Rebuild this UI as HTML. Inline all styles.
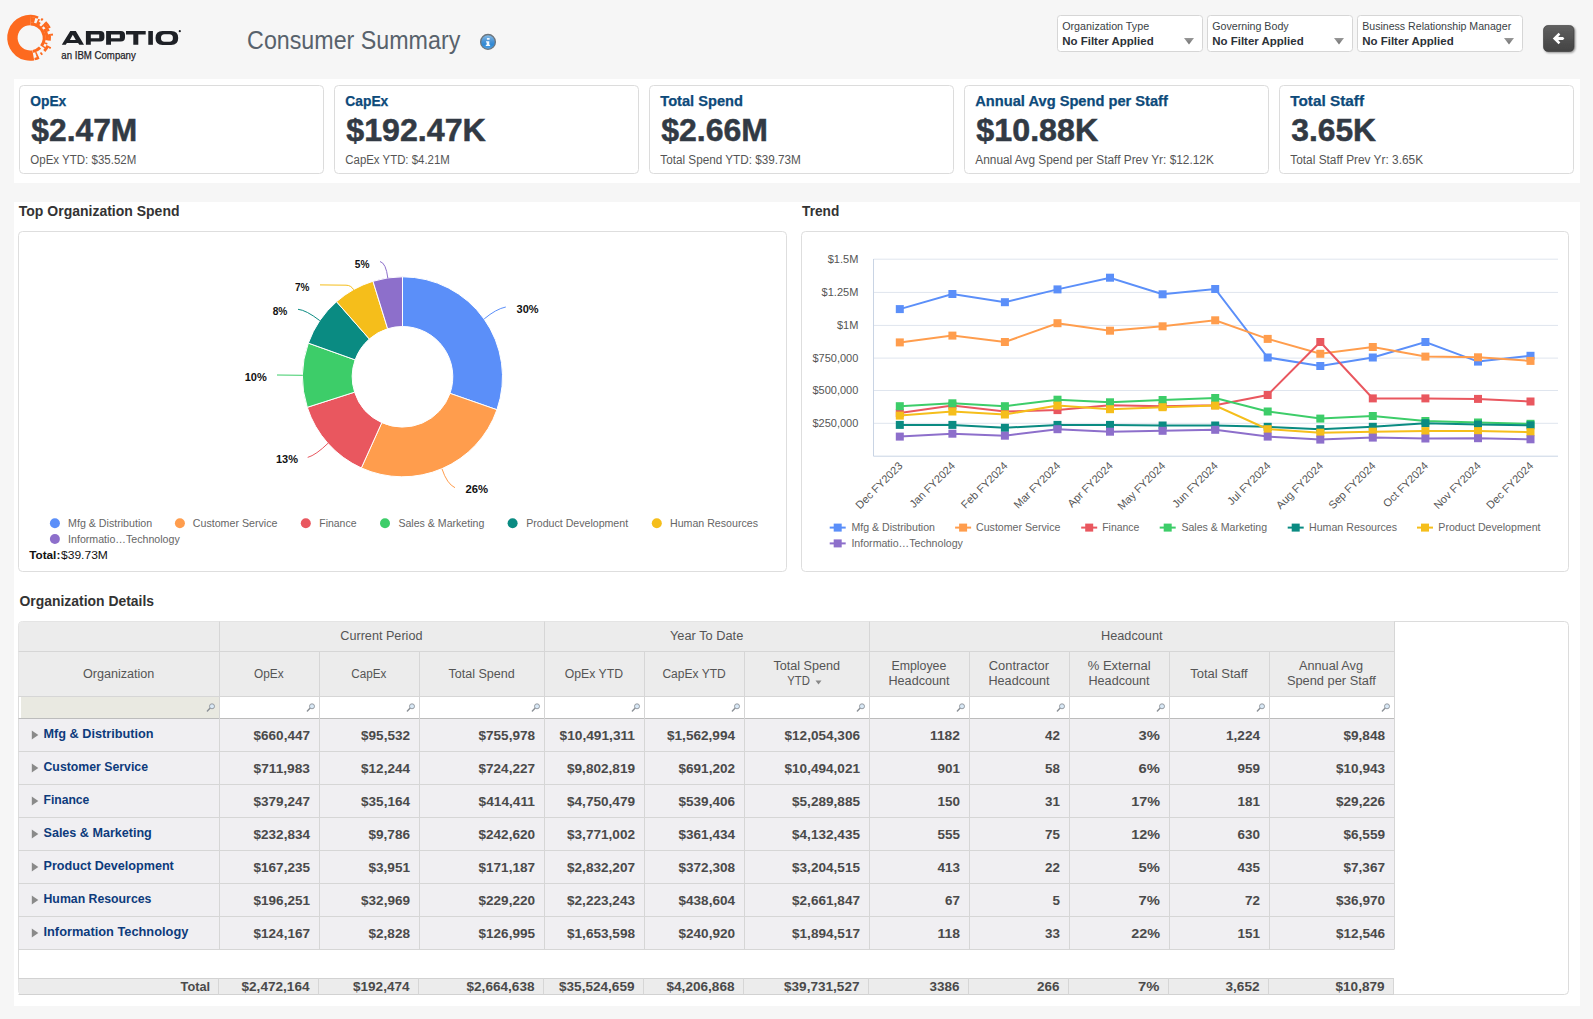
<!DOCTYPE html>
<html><head><meta charset="utf-8"><title>Consumer Summary</title>
<style>
html,body{margin:0;padding:0;background:#f6f6f6;overflow:hidden}
svg{display:block;font-family:"Liberation Sans",sans-serif}
</style></head><body>
<svg width="1593" height="1019" viewBox="0 0 1593 1019">
<rect x="0" y="0" width="1593" height="1019" fill="#f6f6f6" />
<path d="M34.19,60.45 A23.0,23.0 0 1 1 31.00,14.81 L30.64,25.21 A12.6,12.6 0 1 0 32.39,50.21 Z" fill="#fd6a1f"/>
<path d="M30.74,22.31 A15.5,15.5 0 0 1 42.68,47.00 L40.18,45.16 A12.4,12.4 0 0 0 30.63,25.41 Z" fill="#fd6a1f"/>
<path d="M41.16,48.76 A15.5,15.5 0 0 1 33.32,52.98 L32.69,49.95 A12.4,12.4 0 0 0 38.97,46.57 Z" fill="#fd6a1f"/>
<path d="M30.84,19.61 A18.2,18.2 0 0 1 34.73,20.17 L33.98,23.08 A15.2,15.2 0 0 0 30.73,22.61 Z" fill="#fd6a1f"/>
<path d="M37.31,21.05 A18.2,18.2 0 0 1 40.74,22.96 L39.01,25.41 A15.2,15.2 0 0 0 36.14,23.81 Z" fill="#fd6a1f"/>
<path d="M42.84,24.71 A18.2,18.2 0 0 1 44.02,25.96 L41.74,27.91 A15.2,15.2 0 0 0 40.76,26.87 Z" fill="#fd6a1f"/>
<path d="M45.63,28.16 A18.2,18.2 0 0 1 48.20,40.46 L45.24,40.02 A15.2,15.2 0 0 0 43.09,29.75 Z" fill="#fd6a1f"/>
<path d="M47.60,43.12 A18.2,18.2 0 0 1 47.03,44.74 L44.25,43.59 A15.2,15.2 0 0 0 44.74,42.24 Z" fill="#fd6a1f"/>
<path d="M45.80,47.17 A18.2,18.2 0 0 1 44.85,48.60 L42.43,46.82 A15.2,15.2 0 0 0 43.23,45.63 Z" fill="#fd6a1f"/>
<path d="M37.60,54.43 A18.2,18.2 0 0 1 36.01,55.05 L35.05,52.21 A15.2,15.2 0 0 0 36.38,51.69 Z" fill="#fd6a1f"/>
<path d="M30.93,17.01 A20.799999999999997,20.799999999999997 0 0 1 35.37,17.65 L34.65,20.46 A17.9,17.9 0 0 0 30.82,19.91 Z" fill="#fd6a1f"/>
<path d="M38.33,18.65 A20.799999999999997,20.799999999999997 0 0 1 40.09,19.50 L38.71,22.05 A17.9,17.9 0 0 0 37.19,21.32 Z" fill="#fd6a1f"/>
<path d="M44.65,22.84 A20.799999999999997,20.799999999999997 0 0 1 49.79,30.82 L47.06,31.80 A17.9,17.9 0 0 0 42.63,24.92 Z" fill="#fd6a1f"/>
<path d="M50.62,33.83 A20.799999999999997,20.799999999999997 0 0 1 50.78,40.84 L47.91,40.41 A17.9,17.9 0 0 0 47.77,34.38 Z" fill="#fd6a1f"/>
<path d="M49.20,46.26 A20.799999999999997,20.799999999999997 0 0 1 45.31,52.09 L43.21,50.10 A17.9,17.9 0 0 0 46.55,45.08 Z" fill="#fd6a1f"/>
<path d="M43.01,54.19 A20.799999999999997,20.799999999999997 0 0 1 41.41,55.32 L39.84,52.88 A17.9,17.9 0 0 0 41.22,51.91 Z" fill="#fd6a1f"/>
<path d="M38.66,56.80 A20.799999999999997,20.799999999999997 0 0 1 36.83,57.51 L35.91,54.77 A17.9,17.9 0 0 0 37.48,54.15 Z" fill="#fd6a1f"/>
<path d="M31.00,14.81 A23.0,23.0 0 0 1 38.59,16.39 L37.68,18.71 A20.5,20.5 0 0 0 30.92,17.31 Z" fill="#fd6a1f"/>
<path d="M41.70,17.88 A23.0,23.0 0 0 1 43.52,19.05 L42.08,21.09 A20.5,20.5 0 0 0 40.45,20.05 Z" fill="#fd6a1f"/>
<path d="M46.18,21.26 A23.0,23.0 0 0 1 50.77,27.50 L48.53,28.62 A20.5,20.5 0 0 0 44.44,23.05 Z" fill="#fd6a1f"/>
<path d="M52.78,33.41 A23.0,23.0 0 0 1 53.09,35.56 L50.60,35.80 A20.5,20.5 0 0 0 50.32,33.89 Z" fill="#fd6a1f"/>
<path d="M51.21,47.15 A23.0,23.0 0 0 1 50.24,49.09 L48.06,47.86 A20.5,20.5 0 0 0 48.93,46.14 Z" fill="#fd6a1f"/>
<path d="M39.55,58.81 A23.0,23.0 0 0 1 34.82,60.33 L34.32,57.88 A20.5,20.5 0 0 0 38.54,56.53 Z" fill="#fd6a1f"/>
<path d="M61.8,44.8 L70.3,31 L75.8,31 L84,44.8 L79.3,44.8 L78.1,42.9 L66.9,42.9 L65.7,44.8 Z M69.9,39.9 L75.8,39.9 L72.8,34.8 Z" fill="#1e2126" fill-rule="evenodd"/>
<path d="M85.9,31 L100.2,31 Q104.4,31 104.4,35 L104.4,37.6 Q104.4,41.6 100.2,41.6 L90.80000000000001,41.6 L90.80000000000001,44.8 L85.9,44.8 Z M90.80000000000001,34.6 L99.2,34.6 L99.2,38.2 L90.80000000000001,38.2 Z" fill="#1e2126" fill-rule="evenodd"/>
<path d="M106.1,31 L120.8,31 Q125.0,31 125.0,35 L125.0,37.6 Q125.0,41.6 120.8,41.6 L111.0,41.6 L111.0,44.8 L106.1,44.8 Z M111.0,34.6 L119.8,34.6 L119.8,38.2 L111.0,38.2 Z" fill="#1e2126" fill-rule="evenodd"/>
<path d="M126,31 L145.7,31 L145.7,34.6 L138.3,34.6 L138.3,44.8 L133.3,44.8 L133.3,34.6 L126,34.6 Z" fill="#1e2126"/>
<rect x="148.3" y="31" width="4.6" height="13.8" fill="#1e2126"/>
<path d="M162.5,30.9 L171.2,30.9 Q178.2,30.9 178.2,37.9 Q178.2,44.9 171.2,44.9 L162.5,44.9 Q155.5,44.9 155.5,37.9 Q155.5,30.9 162.5,30.9 Z M164.5,34.3 Q161,34.3 161,38 Q161,41.8 164.5,41.8 L169.4,41.8 Q172.9,41.8 172.9,38 Q172.9,34.3 169.4,34.3 Z" fill="#1e2126" fill-rule="evenodd"/>
<circle cx="179.8" cy="31.2" r="1.1" fill="#1e2126"/>
<text x="61.30" y="58.70" font-size="10.5" font-weight="400" fill="#1f2228" textLength="74.50" lengthAdjust="spacingAndGlyphs" stroke="#1f2228" stroke-width="0.25">an IBM Company</text>
<text x="247.10" y="48.80" font-size="25" font-weight="400" fill="#58626c" textLength="213.18" lengthAdjust="spacingAndGlyphs" >Consumer Summary</text>
<defs><linearGradient id="ig" x1="0" y1="0" x2="0" y2="1"><stop offset="0" stop-color="#8cbfe8"/><stop offset="0.45" stop-color="#4a94d6"/><stop offset="0.7" stop-color="#2f88d4"/><stop offset="1" stop-color="#5aa6e6"/></linearGradient><linearGradient id="bg" x1="0" y1="0" x2="0" y2="1"><stop offset="0" stop-color="#606060"/><stop offset="1" stop-color="#434343"/></linearGradient><linearGradient id="tg" x1="0" y1="0" x2="0" y2="1"><stop offset="0" stop-color="#9a9a9a"/><stop offset="1" stop-color="#707070"/></linearGradient><filter id="sh" x="-30%" y="-30%" width="160%" height="170%"><feGaussianBlur in="SourceAlpha" stdDeviation="1"/><feOffset dy="1" dx="0.5"/><feComponentTransfer><feFuncA type="linear" slope="0.45"/></feComponentTransfer><feMerge><feMergeNode/><feMergeNode in="SourceGraphic"/></feMerge></filter></defs>
<circle cx="488" cy="41.9" r="7.4" fill="url(#ig)" stroke="#6d767e" stroke-width="1.3"/>
<path d="M486.9,37.9 h2.7 v1.9 h-2.7 Z M486,41.2 h3.3 v3.6 h0.8 v1.3 h-4.3 v-1.3 h0.9 v-2.3 h-0.7 Z" fill="#f2f8ff"/>
<rect x="1057.5" y="15.5" width="145" height="36" fill="#fff" stroke="#d6d6d6" stroke-width="1" rx="3" />
<text x="1062.20" y="29.60" font-size="10.6" font-weight="400" fill="#3a3f45" textLength="86.98" lengthAdjust="spacingAndGlyphs" >Organization Type</text>
<text x="1062.20" y="44.60" font-size="10.6" font-weight="700" fill="#2d3238" textLength="91.48" lengthAdjust="spacingAndGlyphs" >No Filter Applied</text>
<path d="M1184,38 L1194,38 L1189,44.5 Z" fill="url(#tg)"/>
<rect x="1207.5" y="15.5" width="145" height="36" fill="#fff" stroke="#d6d6d6" stroke-width="1" rx="3" />
<text x="1212.20" y="29.60" font-size="10.6" font-weight="400" fill="#3a3f45" textLength="76.50" lengthAdjust="spacingAndGlyphs" >Governing Body</text>
<text x="1212.20" y="44.60" font-size="10.6" font-weight="700" fill="#2d3238" textLength="91.48" lengthAdjust="spacingAndGlyphs" >No Filter Applied</text>
<path d="M1334,38 L1344,38 L1339,44.5 Z" fill="url(#tg)"/>
<rect x="1357.5" y="15.5" width="165" height="36" fill="#fff" stroke="#d6d6d6" stroke-width="1" rx="3" />
<text x="1362.20" y="29.60" font-size="10.6" font-weight="400" fill="#3a3f45" textLength="148.99" lengthAdjust="spacingAndGlyphs" >Business Relationship Manager</text>
<text x="1362.20" y="44.60" font-size="10.6" font-weight="700" fill="#2d3238" textLength="91.48" lengthAdjust="spacingAndGlyphs" >No Filter Applied</text>
<path d="M1504,38 L1514,38 L1509,44.5 Z" fill="url(#tg)"/>
<g filter="url(#sh)"><rect x="1543.5" y="25.5" width="30.5" height="26" rx="4.5" fill="url(#bg)" stroke="#3a3a3a" stroke-width="0.6"/></g>
<path d="M1552.8,38.5 L1558.6,32.8 L1560.3,34.6 L1558.2,36.9 L1563,36.9 L1564.4,38.5 L1563,40.1 L1558.2,40.1 L1560.3,42.4 L1558.6,44.2 Z" fill="#fff"/>
<rect x="14" y="79" width="1566" height="104" fill="#fff" />
<rect x="19.5" y="85.5" width="304" height="88" fill="#fff" stroke="#dcdcdc" stroke-width="1" rx="4" />
<text x="30.30" y="106.00" font-size="14" font-weight="700" fill="#0d4a7a" textLength="36.00" lengthAdjust="spacingAndGlyphs" stroke="#0d4a7a" stroke-width="0.25">OpEx</text>
<text x="31.30" y="140.70" font-size="30.5" font-weight="700" fill="#323a44" textLength="105.98" lengthAdjust="spacingAndGlyphs" stroke="#323a44" stroke-width="0.5">$2.47M</text>
<text x="30.30" y="163.60" font-size="12" font-weight="400" fill="#555" textLength="106.00" lengthAdjust="spacingAndGlyphs" >OpEx YTD: $35.52M</text>
<rect x="334.5" y="85.5" width="304" height="88" fill="#fff" stroke="#dcdcdc" stroke-width="1" rx="4" />
<text x="345.30" y="106.00" font-size="14" font-weight="700" fill="#0d4a7a" textLength="43.01" lengthAdjust="spacingAndGlyphs" stroke="#0d4a7a" stroke-width="0.25">CapEx</text>
<text x="346.30" y="140.70" font-size="30.5" font-weight="700" fill="#323a44" textLength="139.53" lengthAdjust="spacingAndGlyphs" stroke="#323a44" stroke-width="0.5">$192.47K</text>
<text x="345.30" y="163.60" font-size="12" font-weight="400" fill="#555" textLength="104.51" lengthAdjust="spacingAndGlyphs" >CapEx YTD: $4.21M</text>
<rect x="649.5" y="85.5" width="304" height="88" fill="#fff" stroke="#dcdcdc" stroke-width="1" rx="4" />
<text x="660.30" y="106.00" font-size="14" font-weight="700" fill="#0d4a7a" textLength="82.61" lengthAdjust="spacingAndGlyphs" stroke="#0d4a7a" stroke-width="0.25">Total Spend</text>
<text x="661.30" y="140.70" font-size="30.5" font-weight="700" fill="#323a44" textLength="106.68" lengthAdjust="spacingAndGlyphs" stroke="#323a44" stroke-width="0.5">$2.66M</text>
<text x="660.30" y="163.60" font-size="12" font-weight="400" fill="#555" textLength="140.59" lengthAdjust="spacingAndGlyphs" >Total Spend YTD: $39.73M</text>
<rect x="964.5" y="85.5" width="304" height="88" fill="#fff" stroke="#dcdcdc" stroke-width="1" rx="4" />
<text x="975.30" y="106.00" font-size="14" font-weight="700" fill="#0d4a7a" textLength="192.59" lengthAdjust="spacingAndGlyphs" stroke="#0d4a7a" stroke-width="0.25">Annual Avg Spend per Staff</text>
<text x="976.30" y="140.70" font-size="30.5" font-weight="700" fill="#323a44" textLength="122.00" lengthAdjust="spacingAndGlyphs" stroke="#323a44" stroke-width="0.5">$10.88K</text>
<text x="975.30" y="163.60" font-size="12" font-weight="400" fill="#555" textLength="238.51" lengthAdjust="spacingAndGlyphs" >Annual Avg Spend per Staff Prev Yr: $12.12K</text>
<rect x="1279.5" y="85.5" width="294" height="88" fill="#fff" stroke="#dcdcdc" stroke-width="1" rx="4" />
<text x="1290.30" y="106.00" font-size="14" font-weight="700" fill="#0d4a7a" textLength="73.69" lengthAdjust="spacingAndGlyphs" stroke="#0d4a7a" stroke-width="0.25">Total Staff</text>
<text x="1291.30" y="140.70" font-size="30.5" font-weight="700" fill="#323a44" textLength="84.71" lengthAdjust="spacingAndGlyphs" stroke="#323a44" stroke-width="0.5">3.65K</text>
<text x="1290.30" y="163.60" font-size="12" font-weight="400" fill="#555" textLength="132.78" lengthAdjust="spacingAndGlyphs" >Total Staff Prev Yr: 3.65K</text>
<rect x="14" y="202" width="1566" height="804" fill="#fff" />
<text x="18.80" y="216.00" font-size="14.4" font-weight="700" fill="#333" textLength="160.68" lengthAdjust="spacingAndGlyphs" >Top Organization Spend</text>
<text x="802.10" y="215.80" font-size="14.4" font-weight="700" fill="#333" textLength="37.21" lengthAdjust="spacingAndGlyphs" >Trend</text>
<rect x="18.5" y="231.5" width="768" height="340" fill="#fff" stroke="#dedede" stroke-width="1" rx="4" />
<rect x="801.5" y="231.5" width="767" height="340" fill="#fff" stroke="#dedede" stroke-width="1" rx="4" />
<path d="M402.50,276.80 A100.0,100.0 0 0 1 496.93,409.72 L450.00,393.36 A50.3,50.3 0 0 0 402.50,326.50 Z" fill="#5b8ff9" stroke="#fff" stroke-width="1"/>
<path d="M496.93,409.72 A100.0,100.0 0 0 1 361.34,467.94 L381.80,422.64 A50.3,50.3 0 0 0 450.00,393.36 Z" fill="#ff9d4d" stroke="#fff" stroke-width="1"/>
<path d="M361.34,467.94 A100.0,100.0 0 0 1 307.27,407.31 L354.60,392.15 A50.3,50.3 0 0 0 381.80,422.64 Z" fill="#e9575f" stroke="#fff" stroke-width="1"/>
<path d="M307.27,407.31 A100.0,100.0 0 0 1 308.34,343.12 L355.14,359.86 A50.3,50.3 0 0 0 354.60,392.15 Z" fill="#3dcd69" stroke="#fff" stroke-width="1"/>
<path d="M308.34,343.12 A100.0,100.0 0 0 1 336.52,301.66 L369.31,339.00 A50.3,50.3 0 0 0 355.14,359.86 Z" fill="#0a8b82" stroke="#fff" stroke-width="1"/>
<path d="M336.52,301.66 A100.0,100.0 0 0 1 372.99,281.25 L387.65,328.74 A50.3,50.3 0 0 0 369.31,339.00 Z" fill="#f5be1b" stroke="#fff" stroke-width="1"/>
<path d="M372.99,281.25 A100.0,100.0 0 0 1 402.50,276.80 L402.50,326.50 A50.3,50.3 0 0 0 387.65,328.74 Z" fill="#8d6fcb" stroke="#fff" stroke-width="1"/>
<path d="M484.2,318.9 Q496,309 505.8,307" stroke="#5b8ff9" stroke-width="1" fill="none"/>
<path d="M442,468.9 Q447,484 455,487.7" stroke="#ff9d4d" stroke-width="1" fill="none"/>
<path d="M328.1,443.2 Q316,455 307.7,457.4" stroke="#e9575f" stroke-width="1" fill="none"/>
<path d="M302.8,375.3 L277,375" stroke="#3dcd69" stroke-width="1" fill="none"/>
<path d="M319.8,320.6 Q306,310 298,309.3" stroke="#0a8b82" stroke-width="1" fill="none"/>
<path d="M353.6,289.7 Q351,285.2 346,285.2 L320,284.9" stroke="#f5be1b" stroke-width="1" fill="none"/>
<path d="M387.8,278 Q386,263 380,261.5" stroke="#8d6fcb" stroke-width="1" fill="none"/>
<text x="516.60" y="313.00" font-size="10.8" font-weight="700" fill="#111" textLength="22.02" lengthAdjust="spacingAndGlyphs" >30%</text>
<text x="465.40" y="493.00" font-size="10.8" font-weight="700" fill="#111" textLength="22.62" lengthAdjust="spacingAndGlyphs" >26%</text>
<text x="276.00" y="463.00" font-size="10.8" font-weight="700" fill="#111" textLength="22.02" lengthAdjust="spacingAndGlyphs" >13%</text>
<text x="244.70" y="380.70" font-size="10.8" font-weight="700" fill="#111" textLength="22.12" lengthAdjust="spacingAndGlyphs" >10%</text>
<text x="272.70" y="314.80" font-size="10.8" font-weight="700" fill="#111" textLength="14.70" lengthAdjust="spacingAndGlyphs" >8%</text>
<text x="295.00" y="290.50" font-size="10.8" font-weight="700" fill="#111" textLength="14.50" lengthAdjust="spacingAndGlyphs" >7%</text>
<text x="354.80" y="268.00" font-size="10.8" font-weight="700" fill="#111" textLength="14.70" lengthAdjust="spacingAndGlyphs" >5%</text>
<circle cx="54.9" cy="523.3" r="5" fill="#5b8ff9"/>
<text x="68.10" y="526.80" font-size="11.5" font-weight="400" fill="#666" textLength="84.00" lengthAdjust="spacingAndGlyphs" >Mfg &amp; Distribution</text>
<circle cx="179.9" cy="523.3" r="5" fill="#ff9d4d"/>
<text x="192.80" y="526.80" font-size="11.5" font-weight="400" fill="#666" textLength="84.61" lengthAdjust="spacingAndGlyphs" >Customer Service</text>
<circle cx="305.8" cy="523.3" r="5" fill="#e9575f"/>
<text x="319.30" y="526.80" font-size="11.5" font-weight="400" fill="#666" textLength="37.18" lengthAdjust="spacingAndGlyphs" >Finance</text>
<circle cx="385" cy="523.3" r="5" fill="#3dcd69"/>
<text x="398.40" y="526.80" font-size="11.5" font-weight="400" fill="#666" textLength="85.91" lengthAdjust="spacingAndGlyphs" >Sales &amp; Marketing</text>
<circle cx="512.6" cy="523.3" r="5" fill="#0a8b82"/>
<text x="526.20" y="526.80" font-size="11.5" font-weight="400" fill="#666" textLength="101.92" lengthAdjust="spacingAndGlyphs" >Product Development</text>
<circle cx="656.8" cy="523.3" r="5" fill="#f5be1b"/>
<text x="670.00" y="526.80" font-size="11.5" font-weight="400" fill="#666" textLength="87.98" lengthAdjust="spacingAndGlyphs" >Human Resources</text>
<circle cx="54.9" cy="539" r="5" fill="#8d6fcb"/>
<text x="68.10" y="542.80" font-size="11.5" font-weight="400" fill="#666" textLength="111.60" lengthAdjust="spacingAndGlyphs" >Informatio…Technology</text>
<text x="29.20" y="558.60" font-size="11.5" font-weight="700" fill="#111" textLength="31.11" lengthAdjust="spacingAndGlyphs" >Total:</text>
<text x="61.00" y="558.60" font-size="11.5" font-weight="400" fill="#111" textLength="46.90" lengthAdjust="spacingAndGlyphs" >$39.73M</text>
<line x1="873.5" y1="259.2" x2="1558" y2="259.2" stroke="#dfe5ee" stroke-width="1"/>
<line x1="873.5" y1="292.4" x2="1558" y2="292.4" stroke="#dfe5ee" stroke-width="1"/>
<line x1="873.5" y1="325.4" x2="1558" y2="325.4" stroke="#dfe5ee" stroke-width="1"/>
<line x1="873.5" y1="358.1" x2="1558" y2="358.1" stroke="#dfe5ee" stroke-width="1"/>
<line x1="873.5" y1="390.5" x2="1558" y2="390.5" stroke="#dfe5ee" stroke-width="1"/>
<line x1="873.5" y1="423.3" x2="1558" y2="423.3" stroke="#dfe5ee" stroke-width="1"/>
<line x1="873.5" y1="259" x2="873.5" y2="456.2" stroke="#c9d4e4" stroke-width="1"/>
<line x1="873.5" y1="456.2" x2="1558" y2="456.2" stroke="#c9d4e4" stroke-width="1"/>
<text x="827.74" y="263.00" font-size="11" font-weight="400" fill="#555" >$1.5M</text>
<text x="821.61" y="296.20" font-size="11" font-weight="400" fill="#555" >$1.25M</text>
<text x="836.92" y="329.20" font-size="11" font-weight="400" fill="#555" >$1M</text>
<text x="812.42" y="361.90" font-size="11" font-weight="400" fill="#555" >$750,000</text>
<text x="812.42" y="394.30" font-size="11" font-weight="400" fill="#555" >$500,000</text>
<text x="812.42" y="427.10" font-size="11" font-weight="400" fill="#555" >$250,000</text>
<text transform="translate(903.30,466.5) rotate(-45)" text-anchor="end" font-size="11" fill="#555">Dec FY2023</text>
<text transform="translate(955.86,466.5) rotate(-45)" text-anchor="end" font-size="11" fill="#555">Jan FY2024</text>
<text transform="translate(1008.42,466.5) rotate(-45)" text-anchor="end" font-size="11" fill="#555">Feb FY2024</text>
<text transform="translate(1060.98,466.5) rotate(-45)" text-anchor="end" font-size="11" fill="#555">Mar FY2024</text>
<text transform="translate(1113.54,466.5) rotate(-45)" text-anchor="end" font-size="11" fill="#555">Apr FY2024</text>
<text transform="translate(1166.10,466.5) rotate(-45)" text-anchor="end" font-size="11" fill="#555">May FY2024</text>
<text transform="translate(1218.66,466.5) rotate(-45)" text-anchor="end" font-size="11" fill="#555">Jun FY2024</text>
<text transform="translate(1271.22,466.5) rotate(-45)" text-anchor="end" font-size="11" fill="#555">Jul FY2024</text>
<text transform="translate(1323.78,466.5) rotate(-45)" text-anchor="end" font-size="11" fill="#555">Aug FY2024</text>
<text transform="translate(1376.34,466.5) rotate(-45)" text-anchor="end" font-size="11" fill="#555">Sep FY2024</text>
<text transform="translate(1428.90,466.5) rotate(-45)" text-anchor="end" font-size="11" fill="#555">Oct FY2024</text>
<text transform="translate(1481.46,466.5) rotate(-45)" text-anchor="end" font-size="11" fill="#555">Nov FY2024</text>
<text transform="translate(1534.02,466.5) rotate(-45)" text-anchor="end" font-size="11" fill="#555">Dec FY2024</text>
<polyline points="899.8,309.1 952.4,294.0 1004.9,302.2 1057.5,289.4 1110.0,277.7 1162.6,294.3 1215.2,289.0 1267.7,357.5 1320.3,366.0 1372.8,357.5 1425.4,342.0 1478.0,361.6 1530.5,355.8" fill="none" stroke="#5b8ff9" stroke-width="2"/>
<rect x="895.8" y="305.1" width="8" height="8" fill="#5b8ff9"/>
<rect x="948.4" y="290.0" width="8" height="8" fill="#5b8ff9"/>
<rect x="1000.9" y="298.2" width="8" height="8" fill="#5b8ff9"/>
<rect x="1053.5" y="285.4" width="8" height="8" fill="#5b8ff9"/>
<rect x="1106.0" y="273.7" width="8" height="8" fill="#5b8ff9"/>
<rect x="1158.6" y="290.3" width="8" height="8" fill="#5b8ff9"/>
<rect x="1211.2" y="285.0" width="8" height="8" fill="#5b8ff9"/>
<rect x="1263.7" y="353.5" width="8" height="8" fill="#5b8ff9"/>
<rect x="1316.3" y="362.0" width="8" height="8" fill="#5b8ff9"/>
<rect x="1368.8" y="353.5" width="8" height="8" fill="#5b8ff9"/>
<rect x="1421.4" y="338.0" width="8" height="8" fill="#5b8ff9"/>
<rect x="1474.0" y="357.6" width="8" height="8" fill="#5b8ff9"/>
<rect x="1526.5" y="351.8" width="8" height="8" fill="#5b8ff9"/>
<polyline points="899.8,342.4 952.4,335.6 1004.9,342.0 1057.5,323.2 1110.0,330.7 1162.6,326.3 1215.2,320.3 1267.7,338.9 1320.3,353.8 1372.8,347.0 1425.4,356.6 1478.0,357.3 1530.5,360.9" fill="none" stroke="#ff9d4d" stroke-width="2"/>
<rect x="895.8" y="338.4" width="8" height="8" fill="#ff9d4d"/>
<rect x="948.4" y="331.6" width="8" height="8" fill="#ff9d4d"/>
<rect x="1000.9" y="338.0" width="8" height="8" fill="#ff9d4d"/>
<rect x="1053.5" y="319.2" width="8" height="8" fill="#ff9d4d"/>
<rect x="1106.0" y="326.7" width="8" height="8" fill="#ff9d4d"/>
<rect x="1158.6" y="322.3" width="8" height="8" fill="#ff9d4d"/>
<rect x="1211.2" y="316.3" width="8" height="8" fill="#ff9d4d"/>
<rect x="1263.7" y="334.9" width="8" height="8" fill="#ff9d4d"/>
<rect x="1316.3" y="349.8" width="8" height="8" fill="#ff9d4d"/>
<rect x="1368.8" y="343.0" width="8" height="8" fill="#ff9d4d"/>
<rect x="1421.4" y="352.6" width="8" height="8" fill="#ff9d4d"/>
<rect x="1474.0" y="353.3" width="8" height="8" fill="#ff9d4d"/>
<rect x="1526.5" y="356.9" width="8" height="8" fill="#ff9d4d"/>
<polyline points="899.8,413.1 952.4,405.6 1004.9,411.5 1057.5,410.1 1110.0,405.2 1162.6,406.2 1215.2,405.2 1267.7,395.0 1320.3,342.0 1372.8,398.4 1425.4,398.4 1478.0,398.9 1530.5,401.5" fill="none" stroke="#e9575f" stroke-width="2"/>
<rect x="895.8" y="409.1" width="8" height="8" fill="#e9575f"/>
<rect x="948.4" y="401.6" width="8" height="8" fill="#e9575f"/>
<rect x="1000.9" y="407.5" width="8" height="8" fill="#e9575f"/>
<rect x="1053.5" y="406.1" width="8" height="8" fill="#e9575f"/>
<rect x="1106.0" y="401.2" width="8" height="8" fill="#e9575f"/>
<rect x="1158.6" y="402.2" width="8" height="8" fill="#e9575f"/>
<rect x="1211.2" y="401.2" width="8" height="8" fill="#e9575f"/>
<rect x="1263.7" y="391.0" width="8" height="8" fill="#e9575f"/>
<rect x="1316.3" y="338.0" width="8" height="8" fill="#e9575f"/>
<rect x="1368.8" y="394.4" width="8" height="8" fill="#e9575f"/>
<rect x="1421.4" y="394.4" width="8" height="8" fill="#e9575f"/>
<rect x="1474.0" y="394.9" width="8" height="8" fill="#e9575f"/>
<rect x="1526.5" y="397.5" width="8" height="8" fill="#e9575f"/>
<polyline points="899.8,406.2 952.4,403.3 1004.9,406.2 1057.5,399.7 1110.0,402.3 1162.6,400.0 1215.2,398.0 1267.7,411.5 1320.3,418.6 1372.8,416.0 1425.4,421.0 1478.0,422.5 1530.5,423.8" fill="none" stroke="#3dcd69" stroke-width="2"/>
<rect x="895.8" y="402.2" width="8" height="8" fill="#3dcd69"/>
<rect x="948.4" y="399.3" width="8" height="8" fill="#3dcd69"/>
<rect x="1000.9" y="402.2" width="8" height="8" fill="#3dcd69"/>
<rect x="1053.5" y="395.7" width="8" height="8" fill="#3dcd69"/>
<rect x="1106.0" y="398.3" width="8" height="8" fill="#3dcd69"/>
<rect x="1158.6" y="396.0" width="8" height="8" fill="#3dcd69"/>
<rect x="1211.2" y="394.0" width="8" height="8" fill="#3dcd69"/>
<rect x="1263.7" y="407.5" width="8" height="8" fill="#3dcd69"/>
<rect x="1316.3" y="414.6" width="8" height="8" fill="#3dcd69"/>
<rect x="1368.8" y="412.0" width="8" height="8" fill="#3dcd69"/>
<rect x="1421.4" y="417.0" width="8" height="8" fill="#3dcd69"/>
<rect x="1474.0" y="418.5" width="8" height="8" fill="#3dcd69"/>
<rect x="1526.5" y="419.8" width="8" height="8" fill="#3dcd69"/>
<polyline points="899.8,424.9 952.4,424.9 1004.9,427.8 1057.5,424.9 1110.0,424.9 1162.6,425.5 1215.2,425.5 1267.7,426.8 1320.3,429.2 1372.8,426.8 1425.4,423.2 1478.0,424.6 1530.5,425.3" fill="none" stroke="#0a8b82" stroke-width="2"/>
<rect x="895.8" y="420.9" width="8" height="8" fill="#0a8b82"/>
<rect x="948.4" y="420.9" width="8" height="8" fill="#0a8b82"/>
<rect x="1000.9" y="423.8" width="8" height="8" fill="#0a8b82"/>
<rect x="1053.5" y="420.9" width="8" height="8" fill="#0a8b82"/>
<rect x="1106.0" y="420.9" width="8" height="8" fill="#0a8b82"/>
<rect x="1158.6" y="421.5" width="8" height="8" fill="#0a8b82"/>
<rect x="1211.2" y="421.5" width="8" height="8" fill="#0a8b82"/>
<rect x="1263.7" y="422.8" width="8" height="8" fill="#0a8b82"/>
<rect x="1316.3" y="425.2" width="8" height="8" fill="#0a8b82"/>
<rect x="1368.8" y="422.8" width="8" height="8" fill="#0a8b82"/>
<rect x="1421.4" y="419.2" width="8" height="8" fill="#0a8b82"/>
<rect x="1474.0" y="420.6" width="8" height="8" fill="#0a8b82"/>
<rect x="1526.5" y="421.3" width="8" height="8" fill="#0a8b82"/>
<polyline points="899.8,415.6 952.4,411.5 1004.9,414.5 1057.5,405.6 1110.0,409.2 1162.6,407.2 1215.2,405.6 1267.7,429.2 1320.3,432.7 1372.8,431.7 1425.4,431.1 1478.0,431.1 1530.5,432.2" fill="none" stroke="#f5be1b" stroke-width="2"/>
<rect x="895.8" y="411.6" width="8" height="8" fill="#f5be1b"/>
<rect x="948.4" y="407.5" width="8" height="8" fill="#f5be1b"/>
<rect x="1000.9" y="410.5" width="8" height="8" fill="#f5be1b"/>
<rect x="1053.5" y="401.6" width="8" height="8" fill="#f5be1b"/>
<rect x="1106.0" y="405.2" width="8" height="8" fill="#f5be1b"/>
<rect x="1158.6" y="403.2" width="8" height="8" fill="#f5be1b"/>
<rect x="1211.2" y="401.6" width="8" height="8" fill="#f5be1b"/>
<rect x="1263.7" y="425.2" width="8" height="8" fill="#f5be1b"/>
<rect x="1316.3" y="428.7" width="8" height="8" fill="#f5be1b"/>
<rect x="1368.8" y="427.7" width="8" height="8" fill="#f5be1b"/>
<rect x="1421.4" y="427.1" width="8" height="8" fill="#f5be1b"/>
<rect x="1474.0" y="427.1" width="8" height="8" fill="#f5be1b"/>
<rect x="1526.5" y="428.2" width="8" height="8" fill="#f5be1b"/>
<polyline points="899.8,436.6 952.4,433.7 1004.9,435.7 1057.5,429.2 1110.0,431.7 1162.6,430.8 1215.2,429.8 1267.7,436.6 1320.3,439.6 1372.8,437.6 1425.4,438.5 1478.0,438.2 1530.5,439.3" fill="none" stroke="#8d6fcb" stroke-width="2"/>
<rect x="895.8" y="432.6" width="8" height="8" fill="#8d6fcb"/>
<rect x="948.4" y="429.7" width="8" height="8" fill="#8d6fcb"/>
<rect x="1000.9" y="431.7" width="8" height="8" fill="#8d6fcb"/>
<rect x="1053.5" y="425.2" width="8" height="8" fill="#8d6fcb"/>
<rect x="1106.0" y="427.7" width="8" height="8" fill="#8d6fcb"/>
<rect x="1158.6" y="426.8" width="8" height="8" fill="#8d6fcb"/>
<rect x="1211.2" y="425.8" width="8" height="8" fill="#8d6fcb"/>
<rect x="1263.7" y="432.6" width="8" height="8" fill="#8d6fcb"/>
<rect x="1316.3" y="435.6" width="8" height="8" fill="#8d6fcb"/>
<rect x="1368.8" y="433.6" width="8" height="8" fill="#8d6fcb"/>
<rect x="1421.4" y="434.5" width="8" height="8" fill="#8d6fcb"/>
<rect x="1474.0" y="434.2" width="8" height="8" fill="#8d6fcb"/>
<rect x="1526.5" y="435.3" width="8" height="8" fill="#8d6fcb"/>
<line x1="829.7" y1="527.6" x2="845.7" y2="527.6" stroke="#5b8ff9" stroke-width="2"/>
<rect x="833.7" y="523.6" width="8" height="8" fill="#5b8ff9"/>
<text x="851.40" y="531.00" font-size="11.5" font-weight="400" fill="#666" textLength="83.60" lengthAdjust="spacingAndGlyphs" >Mfg &amp; Distribution</text>
<line x1="955.1" y1="527.6" x2="971.1" y2="527.6" stroke="#ff9d4d" stroke-width="2"/>
<rect x="959.1" y="523.6" width="8" height="8" fill="#ff9d4d"/>
<text x="976.00" y="531.00" font-size="11.5" font-weight="400" fill="#666" textLength="84.41" lengthAdjust="spacingAndGlyphs" >Customer Service</text>
<line x1="1081.2" y1="527.6" x2="1097.2" y2="527.6" stroke="#e9575f" stroke-width="2"/>
<rect x="1085.2" y="523.6" width="8" height="8" fill="#e9575f"/>
<text x="1102.20" y="531.00" font-size="11.5" font-weight="400" fill="#666" textLength="37.18" lengthAdjust="spacingAndGlyphs" >Finance</text>
<line x1="1159.7" y1="527.6" x2="1175.7" y2="527.6" stroke="#3dcd69" stroke-width="2"/>
<rect x="1163.7" y="523.6" width="8" height="8" fill="#3dcd69"/>
<text x="1181.40" y="531.00" font-size="11.5" font-weight="400" fill="#666" textLength="85.71" lengthAdjust="spacingAndGlyphs" >Sales &amp; Marketing</text>
<line x1="1287.7" y1="527.6" x2="1303.7" y2="527.6" stroke="#0a8b82" stroke-width="2"/>
<rect x="1291.7" y="523.6" width="8" height="8" fill="#0a8b82"/>
<text x="1309.00" y="531.00" font-size="11.5" font-weight="400" fill="#666" textLength="88.08" lengthAdjust="spacingAndGlyphs" >Human Resources</text>
<line x1="1417" y1="527.6" x2="1433" y2="527.6" stroke="#f5be1b" stroke-width="2"/>
<rect x="1421" y="523.6" width="8" height="8" fill="#f5be1b"/>
<text x="1438.30" y="531.00" font-size="11.5" font-weight="400" fill="#666" textLength="102.22" lengthAdjust="spacingAndGlyphs" >Product Development</text>
<line x1="829.7" y1="543.4" x2="845.7" y2="543.4" stroke="#8d6fcb" stroke-width="2"/>
<rect x="833.7" y="539.4" width="8" height="8" fill="#8d6fcb"/>
<text x="851.40" y="546.80" font-size="11.5" font-weight="400" fill="#666" textLength="111.50" lengthAdjust="spacingAndGlyphs" >Informatio…Technology</text>
<text x="19.50" y="606.00" font-size="14.4" font-weight="700" fill="#333" textLength="134.59" lengthAdjust="spacingAndGlyphs" >Organization Details</text>
<rect x="18.5" y="621.5" width="1550" height="373" fill="#fff" stroke="#dcdcdc" stroke-width="1" rx="4" />
<path d="M18.5,696 L18.5,625.5 Q18.5,621.5 22.5,621.5 L1394,621.5 L1394,696 Z" fill="#ececec"/>
<rect x="19" y="696" width="1375" height="22" fill="#fff" />
<rect x="21" y="697" width="198" height="21" fill="#e9e9e1" />
<rect x="19" y="718" width="1375" height="231" fill="#f0eff2" />
<path d="M18.5,978.5 L1394,978.5 L1394,994.5 L22.5,994.5 Q18.5,994.5 18.5,990.5 Z" fill="#ececec"/>
<line x1="18.5" y1="651.5" x2="1394" y2="651.5" stroke="#d6d6d6"/>
<line x1="18.5" y1="696.5" x2="1394" y2="696.5" stroke="#d6d6d6"/>
<line x1="18.5" y1="718.5" x2="1394" y2="718.5" stroke="#bcbcbc" stroke-width="1"/>
<line x1="18.5" y1="751.5" x2="1394" y2="751.5" stroke="#d6d6d6"/>
<line x1="18.5" y1="784.5" x2="1394" y2="784.5" stroke="#d6d6d6"/>
<line x1="18.5" y1="817.5" x2="1394" y2="817.5" stroke="#d6d6d6"/>
<line x1="18.5" y1="850.5" x2="1394" y2="850.5" stroke="#d6d6d6"/>
<line x1="18.5" y1="883.5" x2="1394" y2="883.5" stroke="#d6d6d6"/>
<line x1="18.5" y1="916.5" x2="1394" y2="916.5" stroke="#d6d6d6"/>
<line x1="18.5" y1="949.5" x2="1394" y2="949.5" stroke="#d6d6d6"/>
<line x1="18.5" y1="978.5" x2="1394" y2="978.5" stroke="#d2d2d2"/>
<line x1="18.5" y1="994.5" x2="1394" y2="994.5" stroke="#d2d2d2"/>
<line x1="219.5" y1="621.5" x2="219.5" y2="949.5" stroke="#d6d6d6"/>
<line x1="544.5" y1="621.5" x2="544.5" y2="949.5" stroke="#d6d6d6"/>
<line x1="869.5" y1="621.5" x2="869.5" y2="949.5" stroke="#d6d6d6"/>
<line x1="319.5" y1="651.5" x2="319.5" y2="949.5" stroke="#d6d6d6"/>
<line x1="419.5" y1="651.5" x2="419.5" y2="949.5" stroke="#d6d6d6"/>
<line x1="644.5" y1="651.5" x2="644.5" y2="949.5" stroke="#d6d6d6"/>
<line x1="744.5" y1="651.5" x2="744.5" y2="949.5" stroke="#d6d6d6"/>
<line x1="969.5" y1="651.5" x2="969.5" y2="949.5" stroke="#d6d6d6"/>
<line x1="1069.5" y1="651.5" x2="1069.5" y2="949.5" stroke="#d6d6d6"/>
<line x1="1169.5" y1="651.5" x2="1169.5" y2="949.5" stroke="#d6d6d6"/>
<line x1="1269.5" y1="651.5" x2="1269.5" y2="949.5" stroke="#d6d6d6"/>
<line x1="1394.5" y1="621.5" x2="1394.5" y2="949.5" stroke="#d6d6d6"/>
<line x1="218.5" y1="978.5" x2="218.5" y2="994.5" stroke="#d6d6d6"/>
<line x1="318.5" y1="978.5" x2="318.5" y2="994.5" stroke="#d6d6d6"/>
<line x1="418.5" y1="978.5" x2="418.5" y2="994.5" stroke="#d6d6d6"/>
<line x1="543.5" y1="978.5" x2="543.5" y2="994.5" stroke="#d6d6d6"/>
<line x1="643.5" y1="978.5" x2="643.5" y2="994.5" stroke="#d6d6d6"/>
<line x1="743.5" y1="978.5" x2="743.5" y2="994.5" stroke="#d6d6d6"/>
<line x1="868.5" y1="978.5" x2="868.5" y2="994.5" stroke="#d6d6d6"/>
<line x1="968.5" y1="978.5" x2="968.5" y2="994.5" stroke="#d6d6d6"/>
<line x1="1068.5" y1="978.5" x2="1068.5" y2="994.5" stroke="#d6d6d6"/>
<line x1="1168.5" y1="978.5" x2="1168.5" y2="994.5" stroke="#d6d6d6"/>
<line x1="1268.5" y1="978.5" x2="1268.5" y2="994.5" stroke="#d6d6d6"/>
<line x1="1393.5" y1="978.5" x2="1393.5" y2="994.5" stroke="#d6d6d6"/>
<text x="340.30" y="640.00" font-size="12" font-weight="400" fill="#555" textLength="82.17" lengthAdjust="spacingAndGlyphs" >Current Period</text>
<text x="670.00" y="640.00" font-size="12" font-weight="400" fill="#555" textLength="73.27" lengthAdjust="spacingAndGlyphs" >Year To Date</text>
<text x="1101.00" y="640.00" font-size="12" font-weight="400" fill="#555" textLength="61.48" lengthAdjust="spacingAndGlyphs" >Headcount</text>
<text x="82.90" y="677.80" font-size="12" font-weight="400" fill="#555" textLength="71.48" lengthAdjust="spacingAndGlyphs" >Organization</text>
<text x="254.00" y="677.80" font-size="12" font-weight="400" fill="#555" textLength="29.61" lengthAdjust="spacingAndGlyphs" >OpEx</text>
<text x="351.30" y="677.80" font-size="12" font-weight="400" fill="#555" textLength="35.12" lengthAdjust="spacingAndGlyphs" >CapEx</text>
<text x="448.40" y="677.80" font-size="12" font-weight="400" fill="#555" textLength="66.41" lengthAdjust="spacingAndGlyphs" >Total Spend</text>
<text x="564.80" y="677.80" font-size="12" font-weight="400" fill="#555" textLength="58.20" lengthAdjust="spacingAndGlyphs" >OpEx YTD</text>
<text x="662.40" y="677.80" font-size="12" font-weight="400" fill="#555" textLength="63.31" lengthAdjust="spacingAndGlyphs" >CapEx YTD</text>
<text x="773.40" y="669.70" font-size="12" font-weight="400" fill="#555" textLength="66.61" lengthAdjust="spacingAndGlyphs" >Total Spend</text>
<text x="787.20" y="684.60" font-size="12" font-weight="400" fill="#555" textLength="22.60" lengthAdjust="spacingAndGlyphs" >YTD</text>
<path d="M815.5,680.5 L821.5,680.5 L818.5,684.5 Z" fill="#888"/>
<text x="891.40" y="669.70" font-size="12" font-weight="400" fill="#555" textLength="54.99" lengthAdjust="spacingAndGlyphs" >Employee</text>
<text x="888.50" y="685.00" font-size="12" font-weight="400" fill="#555" textLength="60.98" lengthAdjust="spacingAndGlyphs" >Headcount</text>
<text x="988.80" y="669.70" font-size="12" font-weight="400" fill="#555" textLength="60.22" lengthAdjust="spacingAndGlyphs" >Contractor</text>
<text x="988.50" y="685.00" font-size="12" font-weight="400" fill="#555" textLength="60.98" lengthAdjust="spacingAndGlyphs" >Headcount</text>
<text x="1087.70" y="669.70" font-size="12" font-weight="400" fill="#555" textLength="63.03" lengthAdjust="spacingAndGlyphs" >% External</text>
<text x="1088.50" y="685.00" font-size="12" font-weight="400" fill="#555" textLength="60.98" lengthAdjust="spacingAndGlyphs" >Headcount</text>
<text x="1190.20" y="677.80" font-size="12" font-weight="400" fill="#555" textLength="57.55" lengthAdjust="spacingAndGlyphs" >Total Staff</text>
<text x="1299.00" y="669.70" font-size="12" font-weight="400" fill="#555" textLength="64.00" lengthAdjust="spacingAndGlyphs" >Annual Avg</text>
<text x="1286.90" y="685.00" font-size="12" font-weight="400" fill="#555" textLength="88.99" lengthAdjust="spacingAndGlyphs" >Spend per Staff</text>
<line x1="210.2" y1="708.0" x2="207.4" y2="710.9" stroke="#8d9298" stroke-width="1.5" stroke-linecap="round"/>
<circle cx="212.0" cy="706.3" r="2.5" fill="#d8e8f6" stroke="#8d9298" stroke-width="0.9"/>
<line x1="310.2" y1="708.0" x2="307.4" y2="710.9" stroke="#8d9298" stroke-width="1.5" stroke-linecap="round"/>
<circle cx="312.0" cy="706.3" r="2.5" fill="#d8e8f6" stroke="#8d9298" stroke-width="0.9"/>
<line x1="410.2" y1="708.0" x2="407.4" y2="710.9" stroke="#8d9298" stroke-width="1.5" stroke-linecap="round"/>
<circle cx="412.0" cy="706.3" r="2.5" fill="#d8e8f6" stroke="#8d9298" stroke-width="0.9"/>
<line x1="535.2" y1="708.0" x2="532.4" y2="710.9" stroke="#8d9298" stroke-width="1.5" stroke-linecap="round"/>
<circle cx="537.0" cy="706.3" r="2.5" fill="#d8e8f6" stroke="#8d9298" stroke-width="0.9"/>
<line x1="635.2" y1="708.0" x2="632.4" y2="710.9" stroke="#8d9298" stroke-width="1.5" stroke-linecap="round"/>
<circle cx="637.0" cy="706.3" r="2.5" fill="#d8e8f6" stroke="#8d9298" stroke-width="0.9"/>
<line x1="735.2" y1="708.0" x2="732.4" y2="710.9" stroke="#8d9298" stroke-width="1.5" stroke-linecap="round"/>
<circle cx="737.0" cy="706.3" r="2.5" fill="#d8e8f6" stroke="#8d9298" stroke-width="0.9"/>
<line x1="860.2" y1="708.0" x2="857.4" y2="710.9" stroke="#8d9298" stroke-width="1.5" stroke-linecap="round"/>
<circle cx="862.0" cy="706.3" r="2.5" fill="#d8e8f6" stroke="#8d9298" stroke-width="0.9"/>
<line x1="960.2" y1="708.0" x2="957.4" y2="710.9" stroke="#8d9298" stroke-width="1.5" stroke-linecap="round"/>
<circle cx="962.0" cy="706.3" r="2.5" fill="#d8e8f6" stroke="#8d9298" stroke-width="0.9"/>
<line x1="1060.2" y1="708.0" x2="1057.4" y2="710.9" stroke="#8d9298" stroke-width="1.5" stroke-linecap="round"/>
<circle cx="1062.0" cy="706.3" r="2.5" fill="#d8e8f6" stroke="#8d9298" stroke-width="0.9"/>
<line x1="1160.2" y1="708.0" x2="1157.4" y2="710.9" stroke="#8d9298" stroke-width="1.5" stroke-linecap="round"/>
<circle cx="1162.0" cy="706.3" r="2.5" fill="#d8e8f6" stroke="#8d9298" stroke-width="0.9"/>
<line x1="1260.2" y1="708.0" x2="1257.4" y2="710.9" stroke="#8d9298" stroke-width="1.5" stroke-linecap="round"/>
<circle cx="1262.0" cy="706.3" r="2.5" fill="#d8e8f6" stroke="#8d9298" stroke-width="0.9"/>
<line x1="1385.2" y1="708.0" x2="1382.4" y2="710.9" stroke="#8d9298" stroke-width="1.5" stroke-linecap="round"/>
<circle cx="1387.0" cy="706.3" r="2.5" fill="#d8e8f6" stroke="#8d9298" stroke-width="0.9"/>
<path d="M31.8,730.5 L38.3,735 L31.8,739.5 Z" fill="#8a8a8a"/>
<text x="43.50" y="738.00" font-size="12" font-weight="700" fill="#0d3b7c" textLength="109.98" lengthAdjust="spacingAndGlyphs" >Mfg &amp; Distribution</text>
<text x="253.56" y="740.00" font-size="12" font-weight="700" fill="#4a4a4a" textLength="56.42" lengthAdjust="spacingAndGlyphs" >$660,447</text>
<text x="361.06" y="740.00" font-size="12" font-weight="700" fill="#4a4a4a" textLength="48.94" lengthAdjust="spacingAndGlyphs" >$95,532</text>
<text x="478.56" y="740.00" font-size="12" font-weight="700" fill="#4a4a4a" textLength="56.42" lengthAdjust="spacingAndGlyphs" >$755,978</text>
<text x="559.50" y="740.00" font-size="12" font-weight="700" fill="#4a4a4a" textLength="75.51" lengthAdjust="spacingAndGlyphs" >$10,491,311</text>
<text x="667.00" y="740.00" font-size="12" font-weight="700" fill="#4a4a4a" textLength="68.00" lengthAdjust="spacingAndGlyphs" >$1,562,994</text>
<text x="784.50" y="740.00" font-size="12" font-weight="700" fill="#4a4a4a" textLength="75.48" lengthAdjust="spacingAndGlyphs" >$12,054,306</text>
<text x="930.06" y="740.00" font-size="12" font-weight="700" fill="#4a4a4a" textLength="29.90" lengthAdjust="spacingAndGlyphs" >1182</text>
<text x="1045.06" y="740.00" font-size="12" font-weight="700" fill="#4a4a4a" textLength="14.91" lengthAdjust="spacingAndGlyphs" >42</text>
<text x="1138.60" y="740.00" font-size="12" font-weight="700" fill="#4a4a4a" textLength="21.36" lengthAdjust="spacingAndGlyphs" >3%</text>
<text x="1226.00" y="740.00" font-size="12" font-weight="700" fill="#4a4a4a" textLength="34.03" lengthAdjust="spacingAndGlyphs" >1,224</text>
<text x="1343.50" y="740.00" font-size="12" font-weight="700" fill="#4a4a4a" textLength="41.52" lengthAdjust="spacingAndGlyphs" >$9,848</text>
<path d="M31.8,763.5 L38.3,768 L31.8,772.5 Z" fill="#8a8a8a"/>
<text x="43.50" y="771.00" font-size="12" font-weight="700" fill="#0d3b7c" textLength="104.48" lengthAdjust="spacingAndGlyphs" >Customer Service</text>
<text x="253.56" y="773.00" font-size="12" font-weight="700" fill="#4a4a4a" textLength="56.45" lengthAdjust="spacingAndGlyphs" >$711,983</text>
<text x="361.06" y="773.00" font-size="12" font-weight="700" fill="#4a4a4a" textLength="48.94" lengthAdjust="spacingAndGlyphs" >$12,244</text>
<text x="478.56" y="773.00" font-size="12" font-weight="700" fill="#4a4a4a" textLength="56.42" lengthAdjust="spacingAndGlyphs" >$724,227</text>
<text x="567.00" y="773.00" font-size="12" font-weight="700" fill="#4a4a4a" textLength="68.00" lengthAdjust="spacingAndGlyphs" >$9,802,819</text>
<text x="678.56" y="773.00" font-size="12" font-weight="700" fill="#4a4a4a" textLength="56.42" lengthAdjust="spacingAndGlyphs" >$691,202</text>
<text x="784.50" y="773.00" font-size="12" font-weight="700" fill="#4a4a4a" textLength="75.48" lengthAdjust="spacingAndGlyphs" >$10,494,021</text>
<text x="937.56" y="773.00" font-size="12" font-weight="700" fill="#4a4a4a" textLength="22.46" lengthAdjust="spacingAndGlyphs" >901</text>
<text x="1045.06" y="773.00" font-size="12" font-weight="700" fill="#4a4a4a" textLength="14.91" lengthAdjust="spacingAndGlyphs" >58</text>
<text x="1138.60" y="773.00" font-size="12" font-weight="700" fill="#4a4a4a" textLength="21.36" lengthAdjust="spacingAndGlyphs" >6%</text>
<text x="1237.56" y="773.00" font-size="12" font-weight="700" fill="#4a4a4a" textLength="22.46" lengthAdjust="spacingAndGlyphs" >959</text>
<text x="1336.06" y="773.00" font-size="12" font-weight="700" fill="#4a4a4a" textLength="48.94" lengthAdjust="spacingAndGlyphs" >$10,943</text>
<path d="M31.8,796.5 L38.3,801 L31.8,805.5 Z" fill="#8a8a8a"/>
<text x="43.50" y="804.00" font-size="12" font-weight="700" fill="#0d3b7c" textLength="45.87" lengthAdjust="spacingAndGlyphs" >Finance</text>
<text x="253.56" y="806.00" font-size="12" font-weight="700" fill="#4a4a4a" textLength="56.42" lengthAdjust="spacingAndGlyphs" >$379,247</text>
<text x="361.06" y="806.00" font-size="12" font-weight="700" fill="#4a4a4a" textLength="48.94" lengthAdjust="spacingAndGlyphs" >$35,164</text>
<text x="478.56" y="806.00" font-size="12" font-weight="700" fill="#4a4a4a" textLength="56.45" lengthAdjust="spacingAndGlyphs" >$414,411</text>
<text x="567.00" y="806.00" font-size="12" font-weight="700" fill="#4a4a4a" textLength="68.00" lengthAdjust="spacingAndGlyphs" >$4,750,479</text>
<text x="678.56" y="806.00" font-size="12" font-weight="700" fill="#4a4a4a" textLength="56.42" lengthAdjust="spacingAndGlyphs" >$539,406</text>
<text x="792.00" y="806.00" font-size="12" font-weight="700" fill="#4a4a4a" textLength="68.00" lengthAdjust="spacingAndGlyphs" >$5,289,885</text>
<text x="937.56" y="806.00" font-size="12" font-weight="700" fill="#4a4a4a" textLength="22.46" lengthAdjust="spacingAndGlyphs" >150</text>
<text x="1045.06" y="806.00" font-size="12" font-weight="700" fill="#4a4a4a" textLength="14.91" lengthAdjust="spacingAndGlyphs" >31</text>
<text x="1131.20" y="806.00" font-size="12" font-weight="700" fill="#4a4a4a" textLength="28.82" lengthAdjust="spacingAndGlyphs" >17%</text>
<text x="1237.56" y="806.00" font-size="12" font-weight="700" fill="#4a4a4a" textLength="22.46" lengthAdjust="spacingAndGlyphs" >181</text>
<text x="1336.06" y="806.00" font-size="12" font-weight="700" fill="#4a4a4a" textLength="48.94" lengthAdjust="spacingAndGlyphs" >$29,226</text>
<path d="M31.8,829.5 L38.3,834 L31.8,838.5 Z" fill="#8a8a8a"/>
<text x="43.50" y="837.00" font-size="12" font-weight="700" fill="#0d3b7c" textLength="108.30" lengthAdjust="spacingAndGlyphs" >Sales &amp; Marketing</text>
<text x="253.56" y="839.00" font-size="12" font-weight="700" fill="#4a4a4a" textLength="56.42" lengthAdjust="spacingAndGlyphs" >$232,834</text>
<text x="368.50" y="839.00" font-size="12" font-weight="700" fill="#4a4a4a" textLength="41.52" lengthAdjust="spacingAndGlyphs" >$9,786</text>
<text x="478.56" y="839.00" font-size="12" font-weight="700" fill="#4a4a4a" textLength="56.42" lengthAdjust="spacingAndGlyphs" >$242,620</text>
<text x="567.00" y="839.00" font-size="12" font-weight="700" fill="#4a4a4a" textLength="68.00" lengthAdjust="spacingAndGlyphs" >$3,771,002</text>
<text x="678.56" y="839.00" font-size="12" font-weight="700" fill="#4a4a4a" textLength="56.42" lengthAdjust="spacingAndGlyphs" >$361,434</text>
<text x="792.00" y="839.00" font-size="12" font-weight="700" fill="#4a4a4a" textLength="68.00" lengthAdjust="spacingAndGlyphs" >$4,132,435</text>
<text x="937.56" y="839.00" font-size="12" font-weight="700" fill="#4a4a4a" textLength="22.46" lengthAdjust="spacingAndGlyphs" >555</text>
<text x="1045.06" y="839.00" font-size="12" font-weight="700" fill="#4a4a4a" textLength="14.91" lengthAdjust="spacingAndGlyphs" >75</text>
<text x="1131.20" y="839.00" font-size="12" font-weight="700" fill="#4a4a4a" textLength="28.82" lengthAdjust="spacingAndGlyphs" >12%</text>
<text x="1237.56" y="839.00" font-size="12" font-weight="700" fill="#4a4a4a" textLength="22.46" lengthAdjust="spacingAndGlyphs" >630</text>
<text x="1343.50" y="839.00" font-size="12" font-weight="700" fill="#4a4a4a" textLength="41.52" lengthAdjust="spacingAndGlyphs" >$6,559</text>
<path d="M31.8,862.5 L38.3,867 L31.8,871.5 Z" fill="#8a8a8a"/>
<text x="43.50" y="870.00" font-size="12" font-weight="700" fill="#0d3b7c" textLength="130.32" lengthAdjust="spacingAndGlyphs" >Product Development</text>
<text x="253.56" y="872.00" font-size="12" font-weight="700" fill="#4a4a4a" textLength="56.42" lengthAdjust="spacingAndGlyphs" >$167,235</text>
<text x="368.50" y="872.00" font-size="12" font-weight="700" fill="#4a4a4a" textLength="41.52" lengthAdjust="spacingAndGlyphs" >$3,951</text>
<text x="478.56" y="872.00" font-size="12" font-weight="700" fill="#4a4a4a" textLength="56.42" lengthAdjust="spacingAndGlyphs" >$171,187</text>
<text x="567.00" y="872.00" font-size="12" font-weight="700" fill="#4a4a4a" textLength="68.00" lengthAdjust="spacingAndGlyphs" >$2,832,207</text>
<text x="678.56" y="872.00" font-size="12" font-weight="700" fill="#4a4a4a" textLength="56.42" lengthAdjust="spacingAndGlyphs" >$372,308</text>
<text x="792.00" y="872.00" font-size="12" font-weight="700" fill="#4a4a4a" textLength="68.00" lengthAdjust="spacingAndGlyphs" >$3,204,515</text>
<text x="937.56" y="872.00" font-size="12" font-weight="700" fill="#4a4a4a" textLength="22.46" lengthAdjust="spacingAndGlyphs" >413</text>
<text x="1045.06" y="872.00" font-size="12" font-weight="700" fill="#4a4a4a" textLength="14.91" lengthAdjust="spacingAndGlyphs" >22</text>
<text x="1138.60" y="872.00" font-size="12" font-weight="700" fill="#4a4a4a" textLength="21.36" lengthAdjust="spacingAndGlyphs" >5%</text>
<text x="1237.56" y="872.00" font-size="12" font-weight="700" fill="#4a4a4a" textLength="22.46" lengthAdjust="spacingAndGlyphs" >435</text>
<text x="1343.50" y="872.00" font-size="12" font-weight="700" fill="#4a4a4a" textLength="41.52" lengthAdjust="spacingAndGlyphs" >$7,367</text>
<path d="M31.8,895.5 L38.3,900 L31.8,904.5 Z" fill="#8a8a8a"/>
<text x="43.50" y="903.00" font-size="12" font-weight="700" fill="#0d3b7c" textLength="107.89" lengthAdjust="spacingAndGlyphs" >Human Resources</text>
<text x="253.56" y="905.00" font-size="12" font-weight="700" fill="#4a4a4a" textLength="56.42" lengthAdjust="spacingAndGlyphs" >$196,251</text>
<text x="361.06" y="905.00" font-size="12" font-weight="700" fill="#4a4a4a" textLength="48.94" lengthAdjust="spacingAndGlyphs" >$32,969</text>
<text x="478.56" y="905.00" font-size="12" font-weight="700" fill="#4a4a4a" textLength="56.42" lengthAdjust="spacingAndGlyphs" >$229,220</text>
<text x="567.00" y="905.00" font-size="12" font-weight="700" fill="#4a4a4a" textLength="68.00" lengthAdjust="spacingAndGlyphs" >$2,223,243</text>
<text x="678.56" y="905.00" font-size="12" font-weight="700" fill="#4a4a4a" textLength="56.42" lengthAdjust="spacingAndGlyphs" >$438,604</text>
<text x="792.00" y="905.00" font-size="12" font-weight="700" fill="#4a4a4a" textLength="68.00" lengthAdjust="spacingAndGlyphs" >$2,661,847</text>
<text x="945.06" y="905.00" font-size="12" font-weight="700" fill="#4a4a4a" textLength="14.91" lengthAdjust="spacingAndGlyphs" >67</text>
<text x="1052.50" y="905.00" font-size="12" font-weight="700" fill="#4a4a4a" textLength="7.48" lengthAdjust="spacingAndGlyphs" >5</text>
<text x="1138.60" y="905.00" font-size="12" font-weight="700" fill="#4a4a4a" textLength="21.36" lengthAdjust="spacingAndGlyphs" >7%</text>
<text x="1245.06" y="905.00" font-size="12" font-weight="700" fill="#4a4a4a" textLength="14.91" lengthAdjust="spacingAndGlyphs" >72</text>
<text x="1336.06" y="905.00" font-size="12" font-weight="700" fill="#4a4a4a" textLength="48.94" lengthAdjust="spacingAndGlyphs" >$36,970</text>
<path d="M31.8,928.5 L38.3,933 L31.8,937.5 Z" fill="#8a8a8a"/>
<text x="43.50" y="936.00" font-size="12" font-weight="700" fill="#0d3b7c" textLength="144.82" lengthAdjust="spacingAndGlyphs" >Information Technology</text>
<text x="253.56" y="938.00" font-size="12" font-weight="700" fill="#4a4a4a" textLength="56.42" lengthAdjust="spacingAndGlyphs" >$124,167</text>
<text x="368.50" y="938.00" font-size="12" font-weight="700" fill="#4a4a4a" textLength="41.52" lengthAdjust="spacingAndGlyphs" >$2,828</text>
<text x="478.56" y="938.00" font-size="12" font-weight="700" fill="#4a4a4a" textLength="56.42" lengthAdjust="spacingAndGlyphs" >$126,995</text>
<text x="567.00" y="938.00" font-size="12" font-weight="700" fill="#4a4a4a" textLength="68.00" lengthAdjust="spacingAndGlyphs" >$1,653,598</text>
<text x="678.56" y="938.00" font-size="12" font-weight="700" fill="#4a4a4a" textLength="56.42" lengthAdjust="spacingAndGlyphs" >$240,920</text>
<text x="792.00" y="938.00" font-size="12" font-weight="700" fill="#4a4a4a" textLength="68.00" lengthAdjust="spacingAndGlyphs" >$1,894,517</text>
<text x="937.56" y="938.00" font-size="12" font-weight="700" fill="#4a4a4a" textLength="22.42" lengthAdjust="spacingAndGlyphs" >118</text>
<text x="1045.06" y="938.00" font-size="12" font-weight="700" fill="#4a4a4a" textLength="14.91" lengthAdjust="spacingAndGlyphs" >33</text>
<text x="1131.20" y="938.00" font-size="12" font-weight="700" fill="#4a4a4a" textLength="28.82" lengthAdjust="spacingAndGlyphs" >22%</text>
<text x="1237.56" y="938.00" font-size="12" font-weight="700" fill="#4a4a4a" textLength="22.46" lengthAdjust="spacingAndGlyphs" >151</text>
<text x="1336.06" y="938.00" font-size="12" font-weight="700" fill="#4a4a4a" textLength="48.94" lengthAdjust="spacingAndGlyphs" >$12,546</text>
<text x="180.62" y="990.70" font-size="12" font-weight="700" fill="#4a4a4a" textLength="29.40" lengthAdjust="spacingAndGlyphs" >Total</text>
<text x="241.50" y="990.70" font-size="12" font-weight="700" fill="#4a4a4a" textLength="68.00" lengthAdjust="spacingAndGlyphs" >$2,472,164</text>
<text x="353.06" y="990.70" font-size="12" font-weight="700" fill="#4a4a4a" textLength="56.42" lengthAdjust="spacingAndGlyphs" >$192,474</text>
<text x="466.50" y="990.70" font-size="12" font-weight="700" fill="#4a4a4a" textLength="68.00" lengthAdjust="spacingAndGlyphs" >$2,664,638</text>
<text x="559.00" y="990.70" font-size="12" font-weight="700" fill="#4a4a4a" textLength="75.48" lengthAdjust="spacingAndGlyphs" >$35,524,659</text>
<text x="666.50" y="990.70" font-size="12" font-weight="700" fill="#4a4a4a" textLength="68.00" lengthAdjust="spacingAndGlyphs" >$4,206,868</text>
<text x="784.00" y="990.70" font-size="12" font-weight="700" fill="#4a4a4a" textLength="75.48" lengthAdjust="spacingAndGlyphs" >$39,731,527</text>
<text x="929.56" y="990.70" font-size="12" font-weight="700" fill="#4a4a4a" textLength="29.95" lengthAdjust="spacingAndGlyphs" >3386</text>
<text x="1037.06" y="990.70" font-size="12" font-weight="700" fill="#4a4a4a" textLength="22.46" lengthAdjust="spacingAndGlyphs" >266</text>
<text x="1138.10" y="990.70" font-size="12" font-weight="700" fill="#4a4a4a" textLength="21.36" lengthAdjust="spacingAndGlyphs" >7%</text>
<text x="1225.50" y="990.70" font-size="12" font-weight="700" fill="#4a4a4a" textLength="34.03" lengthAdjust="spacingAndGlyphs" >3,652</text>
<text x="1335.56" y="990.70" font-size="12" font-weight="700" fill="#4a4a4a" textLength="48.94" lengthAdjust="spacingAndGlyphs" >$10,879</text>
</svg>
</body></html>
